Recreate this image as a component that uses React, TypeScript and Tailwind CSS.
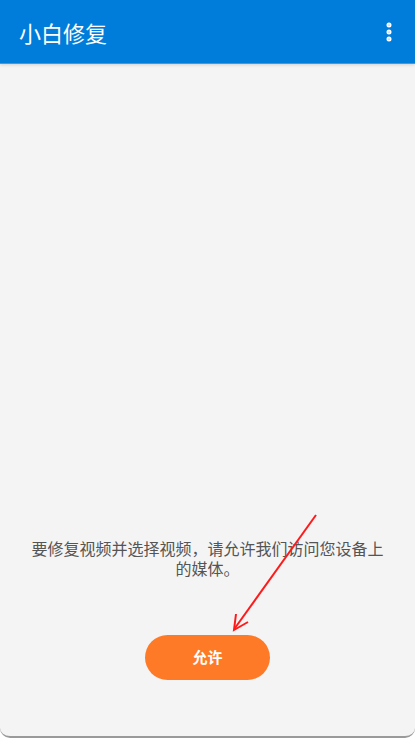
import { EllipsisVertical } from 'lucide-react';

const font = { fontFamily: '"Noto Sans CJK SC", "Noto Sans", sans-serif' };

export default function App() {
  return (
    <div className="relative flex h-[738px] w-[415px] flex-col overflow-hidden rounded-b-[10px] border-b-2 border-[#9a9a9a] bg-[#f4f4f4]" style={font}>
      <header className="flex h-[64px] shrink-0 items-center justify-between border-b border-[#3a9be6] bg-[#007ddb] pl-[19px] pr-[14px] shadow-[0_1px_3px_rgba(0,0,0,0.15)]">
        <h1 className="text-[22px] font-normal leading-none text-white">小白修复</h1>
        <EllipsisVertical className="h-6 w-6 text-white" strokeWidth={3} />
      </header>

      <main className="flex flex-1 flex-col items-center justify-end pb-[56px]">
        <p className="px-[30px] text-center text-[16px] leading-[20px] text-[#555555]">
          要修复视频并选择视频，请允许我们访问您设备上的媒体。
        </p>
        <button className="mt-[57px] h-[45px] w-[125px] rounded-full bg-[#ff7a26] text-[15px] font-bold text-white">
          允许
        </button>
      </main>

      <svg className="pointer-events-none absolute left-0 top-0" width="415" height="738" viewBox="0 0 415 738">
        <line x1="316" y1="515" x2="235" y2="628" stroke="#ff1a1a" strokeWidth="2" />
        <polyline points="236,614 234,630 248,622" fill="none" stroke="#ff1a1a" strokeWidth="2" />
      </svg>
    </div>
  );
}
